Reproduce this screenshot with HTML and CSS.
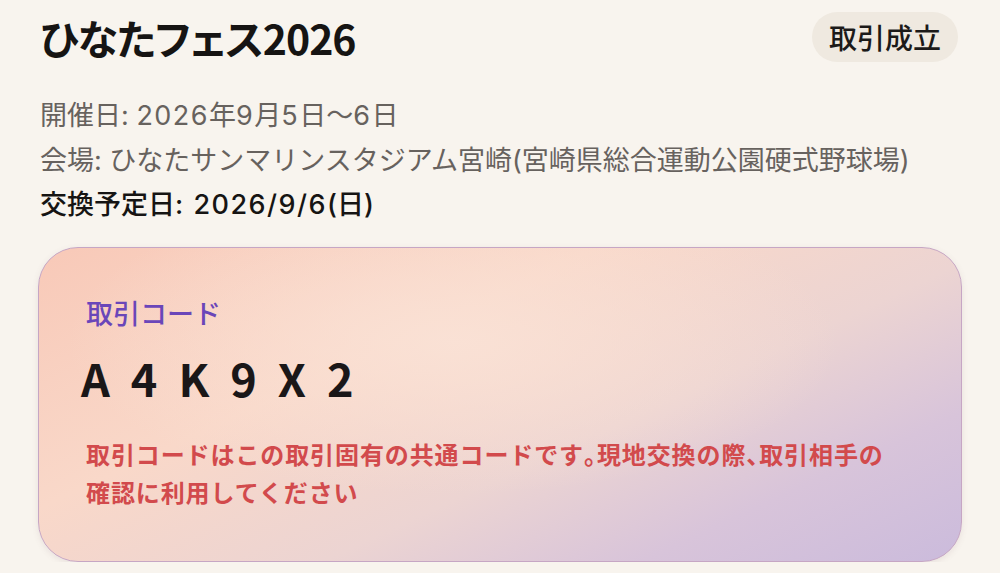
FILE: index.html
```html
<!DOCTYPE html>
<html lang="ja">
<head>
<meta charset="utf-8">
<link rel="stylesheet" href="styles.css">
</head>
<body>
<div class="page">
  <div class="header">
    <h1 class="title">ひなたフェス2026</h1>
    <span class="badge">取引成立</span>
  </div>
  <div class="info">
    <p class="info-line muted">開催日: <span class="num">2026</span>年<span class="num">9</span>月<span class="num">5</span>日〜<span class="num">6</span>日</p>
    <p class="info-line muted">会場: ひなたサンマリンスタジアム宮崎(宮崎県総合運動公園硬式野球場)</p>
    <p class="info-line strong">交換予定日<span class="num">: 2026/9/6</span>(日)</p>
  </div>
  <div class="card">
    <div class="card-label">取引コード</div>
    <div class="code">A4K9X2</div>
    <p class="note">取引コードはこの取引固有の共通コードです<span class="punct">。</span>現地交換の際<span class="punct">、</span>取引相手の<br>確認に利用してください</p>
  </div>
</div>
</body>
</html>
```

FILE: styles.css
```css
html, body {
  margin: 0;
  padding: 0;
  background: #f8f4ee;
}
body {
  font-family: "Noto Sans CJK JP", "Noto Sans", sans-serif;
  color: #1c1a19;
}
.page {
  padding: 10px 42px 0 40px;
}
.header {
  display: flex;
  justify-content: space-between;
  align-items: center;
}
.title {
  margin: 0;
  font-size: 41px;
  font-weight: 600;
  line-height: 54px;
  letter-spacing: -1px;
  font-feature-settings: "palt";
  color: #161413;
}
.badge {
  display: inline-block;
  background: #efe9e0;
  border-radius: 26px;
  padding: 0 17px;
  height: 50px;
  line-height: 50px;
  font-size: 28px;
  font-weight: 500;
  color: #1c1a19;
}
.info {
  margin-top: 30px;
}
.info-line {
  margin: 0;
  font-family: "Inter", "Noto Sans CJK JP", sans-serif;
  font-size: 27px;
  line-height: 44.5px;
  white-space: nowrap;
}
.num {
  letter-spacing: 1.5px;
}
.muted {
  color: #67625e;
}
.strong {
  color: #161413;
  font-weight: 500;
}
.card {
  margin-top: 19px;
  margin-left: -2px;
  margin-right: -4px;
  border: 1px solid #c6a6c4;
  border-radius: 40px;
  padding: 47px 48px 50px 47px;
  background:
    radial-gradient(ellipse 60% 70% at 45% 30%, rgba(250, 226, 214, 0.9), rgba(250, 226, 214, 0) 70%),
    linear-gradient(155deg, #f8c9b8 0%, #f9d8c9 35%, #ecd4d2 60%, #d8c4da 80%, #cbbbdc 100%);
  box-shadow: 0 2px 6px rgba(120, 90, 100, 0.12);
}
.card-label {
  font-size: 27px;
  font-weight: 500;
  line-height: 36px;
  color: #6a46b9;
}
.code {
  margin-top: 22px;
  margin-left: -5px;
  font-family: "Noto Sans CJK JP", "Noto Sans", sans-serif;
  font-size: 45px;
  font-weight: 700;
  letter-spacing: 21px;
  line-height: 50px;
  color: #1a1718;
}
.note {
  margin: 32px 0 0;
  font-size: 24px;
  font-weight: 700;
  line-height: 38px;
  letter-spacing: 0.9px;
  white-space: nowrap;
  color: #d24a4c;
}
.punct {
  font-feature-settings: "halt";
}
```
